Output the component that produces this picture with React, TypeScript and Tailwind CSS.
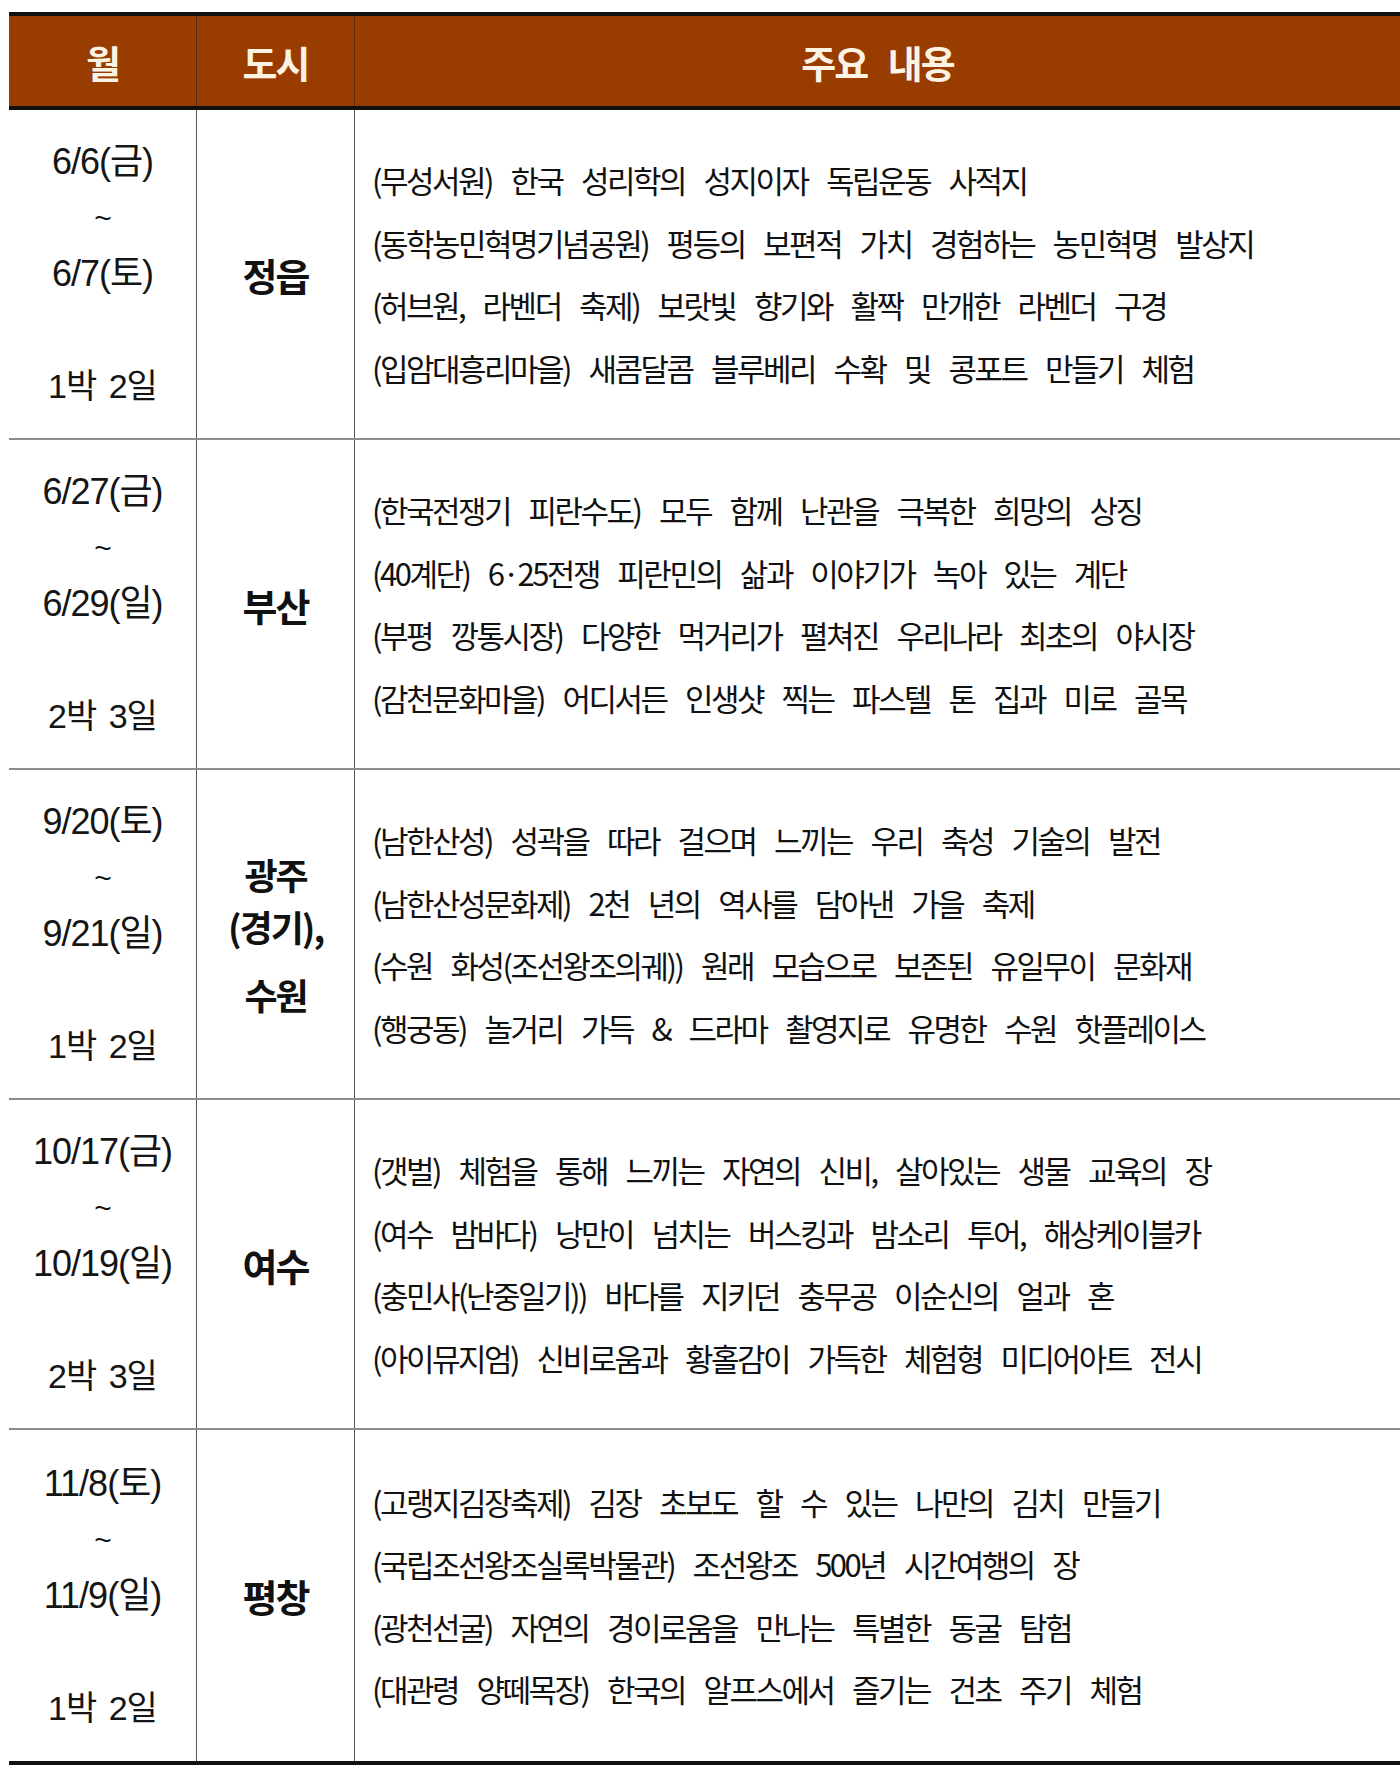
import React from "react";

type Row = {
  d1: string;
  d2: string;
  stay: string;
  city: React.ReactNode;
  items: string[];
};

const rows: Row[] = [
  {
    d1: "6/6(금)",
    d2: "6/7(토)",
    stay: "1박 2일",
    city: "정읍",
    items: [
      "(무성서원) 한국 성리학의 성지이자 독립운동 사적지",
      "(동학농민혁명기념공원) 평등의 보편적 가치 경험하는 농민혁명 발상지",
      "(허브원, 라벤더 축제) 보랏빛 향기와 활짝 만개한 라벤더 구경",
      "(입암대흥리마을) 새콤달콤 블루베리 수확 및 콩포트 만들기 체험",
    ],
  },
  {
    d1: "6/27(금)",
    d2: "6/29(일)",
    stay: "2박 3일",
    city: "부산",
    items: [
      "(한국전쟁기 피란수도) 모두 함께 난관을 극복한 희망의 상징",
      "(40계단) 6·25전쟁 피란민의 삶과 이야기가 녹아 있는 계단",
      "(부평 깡통시장) 다양한 먹거리가 펼쳐진 우리나라 최초의 야시장",
      "(감천문화마을) 어디서든 인생샷 찍는 파스텔 톤 집과 미로 골목",
    ],
  },
  {
    d1: "9/20(토)",
    d2: "9/21(일)",
    stay: "1박 2일",
    city: (
      <div className="flex flex-col items-center text-[36px]">
        <span className="leading-[52px]">광주</span>
        <span className="leading-[52px]">(경기),</span>
        <span className="mt-[16px] leading-[52px]">수원</span>
      </div>
    ),
    items: [
      "(남한산성) 성곽을 따라 걸으며 느끼는 우리 축성 기술의 발전",
      "(남한산성문화제) 2천 년의 역사를 담아낸 가을 축제",
      "(수원 화성(조선왕조의궤)) 원래 모습으로 보존된 유일무이 문화재",
      "(행궁동) 놀거리 가득 & 드라마 촬영지로 유명한 수원 핫플레이스",
    ],
  },
  {
    d1: "10/17(금)",
    d2: "10/19(일)",
    stay: "2박 3일",
    city: "여수",
    items: [
      "(갯벌) 체험을 통해 느끼는 자연의 신비, 살아있는 생물 교육의 장",
      "(여수 밤바다) 낭만이 넘치는 버스킹과 밤소리 투어, 해상케이블카",
      "(충민사(난중일기)) 바다를 지키던 충무공 이순신의 얼과 혼",
      "(아이뮤지엄) 신비로움과 황홀감이 가득한 체험형 미디어아트 전시",
    ],
  },
  {
    d1: "11/8(토)",
    d2: "11/9(일)",
    stay: "1박 2일",
    city: "평창",
    items: [
      "(고랭지김장축제) 김장 초보도 할 수 있는 나만의 김치 만들기",
      "(국립조선왕조실록박물관) 조선왕조 500년 시간여행의 장",
      "(광천선굴) 자연의 경이로움을 만나는 특별한 동굴 탐험",
      "(대관령 양떼목장) 한국의 알프스에서 즐기는 건초 주기 체험",
    ],
  },
];

export default function App() {
  return (
    <div className="w-[1400px] h-[1773px] bg-white pt-[12px] pl-[9px] font-['Noto_Sans_CJK_KR',sans-serif]">
      <div className="w-[1391px]">
        {/* Header */}
        <div className="grid grid-cols-[188px_158px_1fr] h-[98px] border-t-4 border-b-4 border-[#111111] bg-[#993c00] text-[#fdf3e4] font-bold text-[38px] tracking-[-2px]">
          <div className="flex items-center justify-center border-r border-[#5a2a10]">월</div>
          <div className="flex items-center justify-center border-r border-[#5a2a10]">도시</div>
          <div className="flex items-center justify-center [word-spacing:14px]">주요 내용</div>
        </div>
        {/* Body */}
        {rows.map((r, i) => {
          const last = i === rows.length - 1;
          return (
            <div
              key={i}
              className={
                last
                  ? "grid grid-cols-[188px_158px_1fr] h-[335px] border-b-4 border-[#111111]"
                  : "grid grid-cols-[188px_158px_1fr] h-[330px] border-b-2 border-[#8c8c8c]"
              }
            >
              <div className="flex flex-col items-center justify-center border-r border-[#555555] text-[#151515] font-['Liberation_Sans','Noto_Sans_CJK_KR',sans-serif] tracking-[-1px]">
                <div className="leading-[56px] h-[56px] text-[36px]">{r.d1}</div>
                <div className="leading-[56px] h-[56px] text-[30px]">~</div>
                <div className="leading-[56px] h-[56px] text-[36px]">{r.d2}</div>
                <div className="h-[56px]"></div>
                <div className="leading-[56px] h-[56px] text-[34px] [word-spacing:4px]">{r.stay}</div>
              </div>
              <div className="flex items-center justify-center border-r border-[#555555] text-[#111111] font-bold text-[38px] tracking-[-2px]">
                {r.city}
              </div>
              <div className="flex flex-col justify-center pl-[17px] text-[#111111] text-[31px] tracking-[-2.5px] [word-spacing:14px]">
                {r.items.map((t, j) => (
                  <div key={j} className="leading-[62.5px] h-[62.5px] whitespace-nowrap">
                    {t}
                  </div>
                ))}
              </div>
            </div>
          );
        })}
      </div>
    </div>
  );
}
